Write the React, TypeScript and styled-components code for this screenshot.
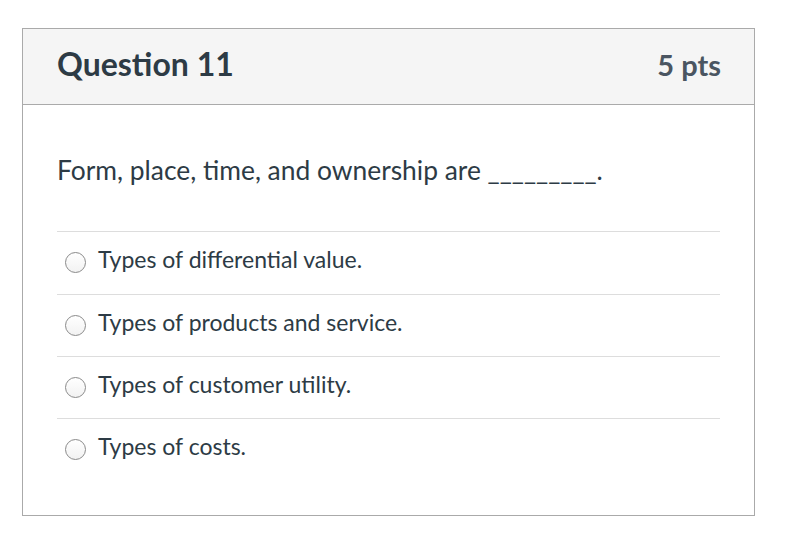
import React from 'react';
import styled, { createGlobalStyle } from 'styled-components';

const GlobalStyle = createGlobalStyle`
  html, body {
    margin: 0;
    padding: 0;
    background: #ffffff;
  }
  body {
    font-family: Lato, "Noto Sans", sans-serif;
    color: #2d3b45;
  }
`;

const Page = styled.div`
  padding: 28px 0 0 22px;
`;

const Card = styled.div`
  width: 731px;
  border: 1px solid #aaaaaa;
  background: #ffffff;
`;

const Header = styled.div`
  display: flex;
  align-items: center;
  justify-content: space-between;
  height: 75px;
  padding: 0 33px 0 34px;
  background: #f5f5f5;
  border-bottom: 1px solid #aaaaaa;
`;

const Title = styled.h2`
  margin: 0;
  font-size: 32px;
  font-weight: 700;
  color: #2d3b45;
  line-height: 1;
  padding-bottom: 5px;
`;

const Points = styled.span`
  font-size: 29px;
  font-weight: 700;
  color: #4a5561;
  line-height: 1;
  padding-bottom: 5px;
`;

const Body = styled.div`
  padding: 50px 34px 34px 34px;
`;

const QuestionText = styled.p`
  margin: 0 0 46px 0;
  font-size: 26.4px;
  line-height: 30px;
  color: #2d3b45;
`;

const AnswerList = styled.div`
  display: flex;
  flex-direction: column;
`;

const AnswerRow = styled.label`
  display: flex;
  align-items: center;
  gap: 12px;
  height: 63px;
  padding: 0 0 6px 8px;
  box-sizing: border-box;
  border-top: 1px solid #dddddd;

  &:nth-child(3),
  &:nth-child(4) {
    margin-top: -1px;
  }
`;

const Radio = styled.span`
  width: 19px;
  height: 19px;
  border-radius: 50%;
  border: 1px solid #8a8a8a;
  background: linear-gradient(#ffffff, #f2f2f2);
  flex-shrink: 0;
  margin-top: 5px;
`;

const AnswerText = styled.span`
  font-size: 23px;
  color: #2d3b45;
  line-height: 1;
  margin-bottom: 2px;
`;

const answers = [
  'Types of differential value.',
  'Types of products and service.',
  'Types of customer utility.',
  'Types of costs.',
];

export default function App() {
  return (
    <>
      <GlobalStyle />
      <Page>
        <Card>
          <Header>
            <Title>Question 11</Title>
            <Points>5 pts</Points>
          </Header>
          <Body>
            <QuestionText>Form, place, time, and ownership are _________.</QuestionText>
            <AnswerList>
              {answers.map((a) => (
                <AnswerRow key={a}>
                  <Radio />
                  <AnswerText>{a}</AnswerText>
                </AnswerRow>
              ))}
            </AnswerList>
          </Body>
        </Card>
      </Page>
    </>
  );
}
